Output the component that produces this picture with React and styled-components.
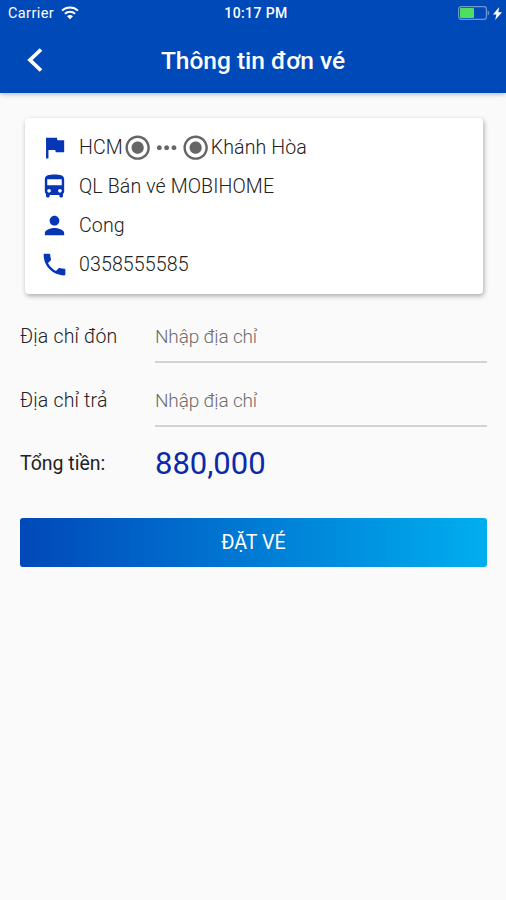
import React from 'react';
import styled, { createGlobalStyle } from 'styled-components';
import {
  MdDirectionsBus,
  MdFlag,
  MdMoreHoriz,
  MdPerson,
  MdPhone,
  MdRadioButtonChecked,
} from 'react-icons/md';

const GlobalStyle = createGlobalStyle`
  * {
    box-sizing: border-box;
  }

  body {
    margin: 0;
    background-color: #fafafa;
    font-family: Roboto, 'Liberation Sans', sans-serif;
    color: #222;
  }
`;

const Screen = styled.div`
  min-height: 900px;
  overflow: hidden;
`;

const Header = styled.header`
  height: 93px;
  background-color: #0049b8;
  color: #fff;
  box-shadow: 0 1px 5px rgba(0, 0, 0, 0.3);
`;

const StatusBar = styled.div`
  height: 26px;
  display: grid;
  grid-template-columns: 1fr auto 1fr;
  align-items: center;
  padding: 0 4px 0 8px;
  font-size: 14px;
  font-weight: 500;
`;

const Carrier = styled.div`
  display: flex;
  align-items: center;
  gap: 7px;
  font-size: 14.5px;
  font-weight: 400;
  letter-spacing: 0.4px;
`;

const Clock = styled.div`
  letter-spacing: 0.4px;
  padding-left: 2px;
`;

const Power = styled.div`
  display: flex;
  align-items: center;
  justify-content: flex-end;
  gap: 3px;
`;

const TitleBar = styled.div`
  height: 67px;
  display: grid;
  grid-template-columns: 70px 1fr 70px;
  align-items: center;
`;

const BackButton = styled.button`
  display: flex;
  justify-content: center;
  padding: 0;
  border: 0;
  background: none;
  color: inherit;
`;

const Title = styled.h1`
  margin: 0;
  padding-top: 1px;
  text-align: center;
  font-size: 24.5px;
  font-weight: 500;
`;

const Card = styled.section`
  display: flex;
  flex-direction: column;
  height: 176px;
  margin: 25px 23px 0 25px;
  padding: 10px 15px;
  border-radius: 4px;
  background-color: #fff;
  box-shadow: 1px 2px 5px rgba(0, 0, 0, 0.32);
`;

const InfoRow = styled.div`
  display: flex;
  align-items: center;
  height: 39px;
  font-size: 19.6px;
  font-weight: 300;
  letter-spacing: 0.1px;
`;

const RowIcon = styled.span`
  display: flex;
  width: 39px;
  color: #0635b5;
  font-size: 29px;
`;

const RouteIcons = styled.span`
  display: flex;
  color: #666;
  font-size: 29.3px;
`;

const Form = styled.form`
  padding: 11px 19px 0 20px;
`;

const Field = styled.div`
  display: grid;
  grid-template-columns: 135px 1fr;
  align-items: center;
  height: 63.5px;
`;

const Label = styled.label`
  font-size: 19.5px;
  font-weight: ${({ $strong }) => ($strong ? 400 : 300)};
  letter-spacing: ${({ $strong }) => ($strong ? 0 : '0.2px')};
`;

const AddressInput = styled.input`
  height: 53px;
  min-width: 0;
  padding: 2px 0 0;
  border: 0;
  border-bottom: 2px solid #d2d2d2;
  border-radius: 0;
  outline: none;
  background: none;
  font: 300 19px Roboto, 'Liberation Sans', sans-serif;
  letter-spacing: -0.15px;

  &::placeholder {
    color: #6c6c6c;
    opacity: 1;
  }
`;

const Total = styled.div`
  color: #0a2ba8;
  font-size: 31px;
  font-weight: 400;
`;

const SubmitButton = styled.button`
  display: block;
  width: 100%;
  height: 49px;
  margin-top: 22.5px;
  border: 0;
  border-radius: 3px;
  background: linear-gradient(90deg, #0048b9, #00aeef);
  color: #fff;
  font: 400 19.7px Roboto, 'Liberation Sans', sans-serif;
`;

const WifiIcon = () => (
  <svg width="18" height="14" viewBox="0 0 18 14" fill="none">
    <path d="M1 4.6a11.6 11.6 0 0 1 16 0" stroke="#fff" strokeWidth="2" />
    <path d="M3.9 7.8a7.4 7.4 0 0 1 10.2 0" stroke="#fff" strokeWidth="2" />
    <path d="M6 10.3a4.4 4.4 0 0 1 6 0L9 13.3z" fill="#fff" />
  </svg>
);

const BatteryIcon = () => (
  <svg width="32" height="14" viewBox="0 0 32 14" fill="none">
    <rect x="0.6" y="0.6" width="27.8" height="12.8" rx="2.6" stroke="#7196d2" strokeWidth="1.2" />
    <rect x="2" y="2" width="14" height="10" rx="1" fill="#4cdf62" />
    <path d="M29.6 4.5c2 .6 2 4.4 0 5z" fill="#7196d2" />
  </svg>
);

const BoltIcon = () => (
  <svg width="9" height="13" viewBox="0 0 9 13">
    <path d="M6.2 0 0 7.5h3.4L2.2 13 9 5.2H5.3z" fill="#fff" />
  </svg>
);

const BackIcon = () => (
  <svg width="16" height="24" viewBox="0 0 16 24" fill="none">
    <path d="M14 1.5 3 12l11 10.5" stroke="#fff" strokeWidth="3.8" />
  </svg>
);

const details = [
  { icon: MdDirectionsBus, text: 'QL Bán vé MOBIHOME' },
  { icon: MdPerson, text: 'Cong' },
  { icon: MdPhone, text: '0358555585' },
];

const fields = [
  { id: 'pickup', label: 'Địa chỉ đón' },
  { id: 'dropoff', label: 'Địa chỉ trả' },
];

const AppHeader = () => (
  <Header>
    <StatusBar>
      <Carrier>
        Carrier
        <WifiIcon />
      </Carrier>
      <Clock>10:17 PM</Clock>
      <Power>
        <BatteryIcon />
        <BoltIcon />
      </Power>
    </StatusBar>
    <TitleBar>
      <BackButton type="button">
        <BackIcon />
      </BackButton>
      <Title>Thông tin đơn vé</Title>
    </TitleBar>
  </Header>
);

const TripCard = () => (
  <Card>
    <InfoRow>
      <RowIcon>
        <MdFlag />
      </RowIcon>
      HCM
      <RouteIcons>
        <MdRadioButtonChecked />
        <MdMoreHoriz />
        <MdRadioButtonChecked />
      </RouteIcons>
      Khánh Hòa
    </InfoRow>
    {details.map(({ icon: Icon, text }) => (
      <InfoRow key={text}>
        <RowIcon>
          <Icon />
        </RowIcon>
        {text}
      </InfoRow>
    ))}
  </Card>
);

const App = () => {
  return (
    <Screen>
      <GlobalStyle />
      <AppHeader />
      <TripCard />
      <Form>
        {fields.map(({ id, label }) => (
          <Field key={id}>
            <Label htmlFor={id}>{label}</Label>
            <AddressInput id={id} placeholder="Nhập địa chỉ" />
          </Field>
        ))}
        <Field>
          <Label as="span" $strong>
            Tổng tiền:
          </Label>
          <Total>880,000</Total>
        </Field>
        <SubmitButton type="button">ĐẶT VÉ</SubmitButton>
      </Form>
    </Screen>
  );
};

export default App;
